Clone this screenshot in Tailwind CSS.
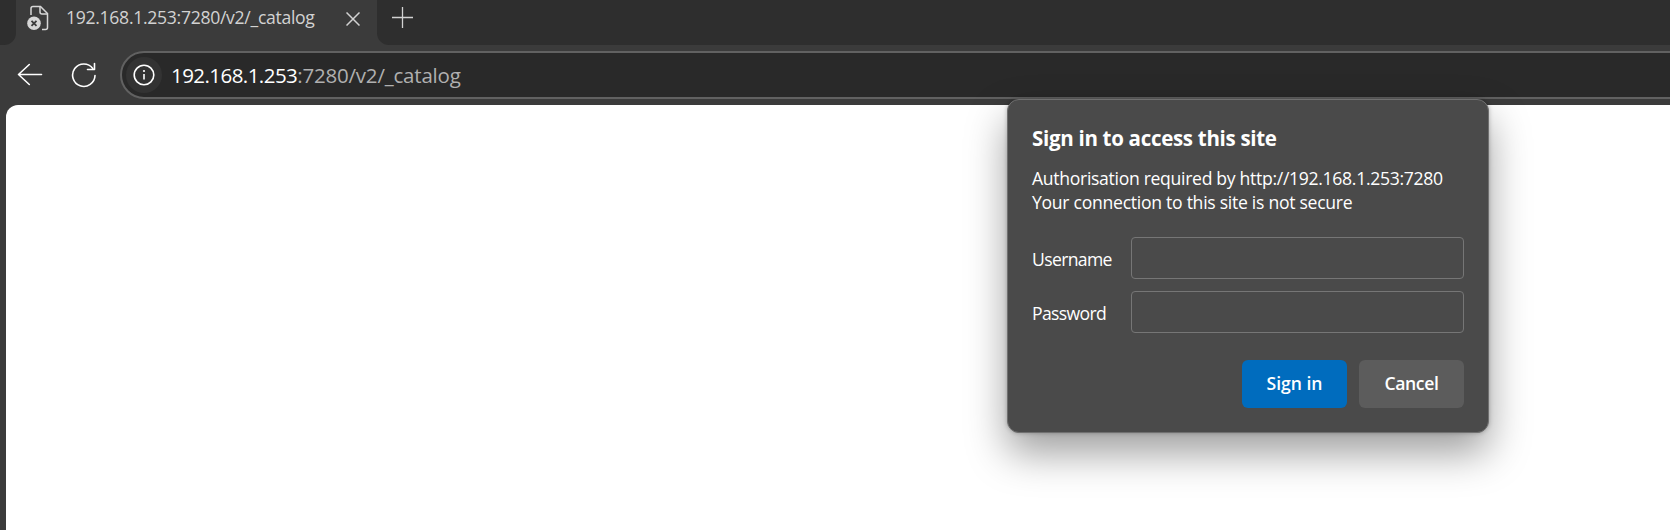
<!DOCTYPE html>
<html lang="en">
<head>
  <meta charset="UTF-8">
  <meta name="viewport" content="width=device-width, initial-scale=1">
  <title>192.168.1.253:7280/v2/_catalog</title>
  <script src="https://cdn.jsdelivr.net/npm/@tailwindcss/browser@4"></script>
</head>
<body class="h-[530px] overflow-hidden bg-[#3b3b3b] font-['Segoe_UI','Open_Sans',sans-serif] text-white flex flex-col">
  <!-- Tab strip -->
  <header class="flex h-[45px] shrink-0">
    <div class="w-4 bg-[#2e2e2e] rounded-br-xl"></div>
    <div class="w-[361px] flex items-start text-[#d2d2d2]">
      <svg class="ml-[11px] mt-[5px] shrink-0" width="22" height="26" viewBox="0 0 22 26" fill="none" stroke="#d6d6d6" stroke-width="1.5">
        <path d="M4 10V3.500Q4 1.500 6 1.500h7.500l7 7V22.500q0 2-2 2h-3.500"/>
        <path d="M13 1.500v5.500q0 2 2 2h5.500"/>
        <circle cx="7" cy="18.300" r="6.800" fill="#d6d6d6" stroke="none"/>
        <path d="M4.500 15.800l5 5m0-5l-5 5" stroke="#3b3b3b" stroke-width="1.800"/>
      </svg>
      <span class="ml-[17px] mt-0.5 w-[249px] text-[17.600px] leading-[30px] tracking-[-0.3px] whitespace-nowrap">192.168.1.253:7280/v2/_catalog</span>
      <svg class="ml-[31px] mt-3 shrink-0" width="14" height="14" viewBox="0 0 14 14" stroke="#d2d2d2" stroke-width="1.500">
        <path d="M.5 .5l13 13M13.500 .5l-13 13"/>
      </svg>
    </div>
    <div class="flex-1 bg-[#2e2e2e] rounded-bl-xl">
      <svg class="ml-[15px] mt-[7px]" width="21" height="21" viewBox="0 0 21 21" stroke="#d2d2d2" stroke-width="1.300">
        <path d="M10.500 0v21M0 10.500h21"/>
      </svg>
    </div>
  </header>

  <!-- Toolbar -->
  <nav class="flex h-[60px] shrink-0 pt-1.5">
    <svg class="ml-[17px] mt-3" width="26" height="23" viewBox="0 0 26 23" fill="none" stroke="#fff" stroke-width="1.600" stroke-linecap="round" stroke-linejoin="round">
      <path d="M12.300 1.500L1.500 11.500l10.800 10M1.500 11.500h23"/>
    </svg>
    <svg class="ml-[28px] mt-[11px]" width="26" height="26" viewBox="0 0 26 26" fill="none" stroke="#fff" stroke-width="1.600" stroke-linecap="round" stroke-linejoin="round">
      <path d="M24 13.500A11.200 11.200 0 1 1 21.800 6.500"/>
      <path d="M23.500 1.500v6h-7"/>
    </svg>
    <div class="ml-[23px] -mr-8 flex-1 h-12 rounded-full border-2 border-[#616161] bg-[#292929] flex items-center">
      <div class="ml-1 size-9 rounded-full bg-[#333] flex items-center justify-center">
        <svg width="22" height="22" viewBox="0 0 22 22" fill="none" stroke="#fff" stroke-width="1.600">
          <circle cx="11" cy="11" r="9.800"/>
          <path d="M11 10v5.500"/>
          <circle cx="11" cy="7" r="1.100" fill="#fff" stroke="none"/>
        </svg>
      </div>
      <p class="ml-[9px] text-[20.500px] leading-7 tracking-[-0.2px] text-[#b0b0b0]"><span class="text-white tracking-[-0.550px]">192.168.1.253</span>:7280/v2/_catalog</p>
    </div>
  </nav>

  <!-- Page -->
  <main class="ml-1.5 flex-1 bg-white rounded-tl-xl"></main>

  <!-- Sign in dialog -->
  <form class="absolute left-[1007px] top-[99px] w-[482px] h-[334px] rounded-xl border border-[#707070] bg-[#4a4a4a] px-6 shadow-[0_0_4px_rgba(0,0,0,0.25),0_20px_40px_rgba(0,0,0,0.38)] text-[17.600px] whitespace-nowrap">
    <h1 class="mt-6 text-[20.500px] leading-7 font-bold tracking-[-0.3px]">Sign in to access this site</h1>
    <p class="mt-[14px] leading-6 tracking-[-0.31px]">Authorisation required by http://192.168.1.253:7280</p>
    <p class="leading-6 tracking-[-0.28px]">Your connection to this site is not secure</p>
    <div class="mt-[23px] grid grid-cols-[99px_333px] gap-y-3 items-center">
      <label for="username" class="pt-0.5 tracking-[-0.65px]">Username</label>
      <input id="username" type="text" class="h-[42px] rounded-[4px] border border-[#767676]">
      <label for="password" class="pt-0.5 tracking-[-0.65px]">Password</label>
      <input id="password" type="password" class="h-[42px] rounded-[4px] border border-[#767676]">
    </div>
    <div class="mt-[27px] flex justify-end gap-3 font-semibold">
      <button type="button" class="w-[105px] h-12 pb-px rounded-md bg-[#006cbe] tracking-[-0.05px]">Sign in</button>
      <button type="button" class="w-[105px] h-12 pb-px rounded-md bg-[#5c5c5c] tracking-[-0.35px]">Cancel</button>
    </div>
  </form>
</body>
</html>
